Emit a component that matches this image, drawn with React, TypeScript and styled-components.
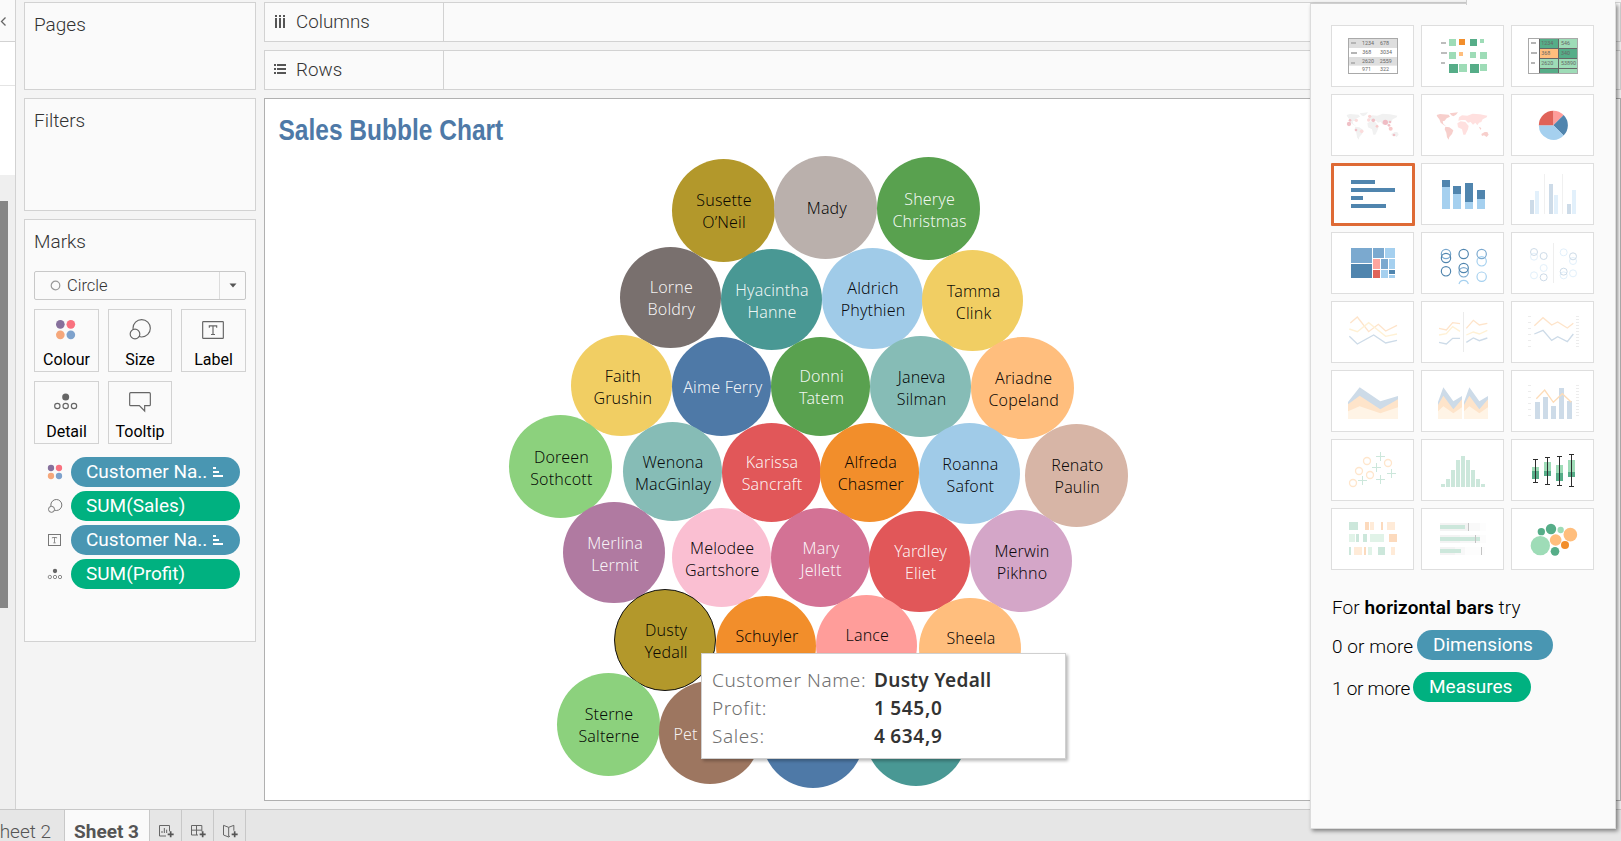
import React from "react";
import styled, { createGlobalStyle, css } from "styled-components";

const Global = createGlobalStyle`
  * { box-sizing: border-box; }
  body { margin: 0; background: #f4f4f4; font-family: Roboto, "Noto Sans", sans-serif; color: #333; }
  svg { display: block; }
`;

const Frame = styled.div`
  position: relative;
  display: flex;
  flex-direction: column;
  width: 1621px;
  height: 841px;
  overflow: hidden;
  background: #f4f4f4;
`;
const Workspace = styled.div`
  display: flex;
  height: 809px;
`;

/* data pane strip */
const DataStrip = styled.div`
  display: flex;
  flex-direction: column;
  width: 16px;
  height: 809px;
  border-right: 1px solid #d2d2d2;
  background: #fff;
`;
const StripHead = styled.div`
  height: 42px;
  padding-top: 16px;
  background: #fafafa;
  border-bottom: 1px solid #d2d2d2;
`;
const StripRow = styled.div`
  height: 44px;
  border-bottom: 1px solid #e4e4e4;
`;
const StripBody = styled.div`
  flex: 1;
  margin-top: 89px;
  padding-top: 26px;
  background: #efefef;
`;
const ScrollThumb = styled.div`
  width: 8px;
  height: 407px;
  background: #868686;
`;

/* shelves and cards */
const CardColumn = styled.div`
  display: flex;
  flex-direction: column;
  gap: 8px;
  width: 232px;
  margin: 2px 8px 0;
`;
const Card = styled.section<{ $h: number }>`
  height: ${(p) => p.$h}px;
  padding: 0 9px;
  border: 1px solid #d2d2d2;
  background: #fafafa;
`;
const CardTitle = styled.h2`
  margin: 0;
  padding-top: 8px;
  font-size: 19px;
  font-weight: 300;
  line-height: 28px;
`;
const Main = styled.div`
  display: flex;
  flex-direction: column;
  flex: 1;
  padding-top: 2px;
`;
const Shelf = styled.div`
  display: flex;
  height: 40px;
  margin-bottom: 8px;
  border: 1px solid #d2d2d2;
  background: #fafafa;
`;
const ShelfLabel = styled.div`
  display: flex;
  align-items: center;
  gap: 10px;
  width: 179px;
  padding-left: 9px;
  border-right: 1px solid #d2d2d2;
  font-size: 18.8px;
  font-weight: 300;
`;

const MarkSelect = styled.div`
  display: flex;
  width: 212px;
  height: 29px;
  margin: 15px 0 9px;
  border: 1px solid #c8c8c8;
  border-radius: 2px;
`;
const MarkSelectValue = styled.div`
  display: flex;
  align-items: center;
  gap: 6px;
  width: 185px;
  padding-left: 15px;
  border-right: 1px solid #dcdcdc;
  font-size: 16.5px;
  font-weight: 300;
`;
const SelectArrow = styled.div`
  flex: 1;
  display: flex;
  align-items: center;
  justify-content: center;
`;
const MarkGrid = styled.div`
  display: grid;
  grid-template-columns: 65px 64px 65px;
  gap: 9px;
`;
const MarkButton = styled.div`
  height: 63px;
  border: 1px solid #d2d2d2;
  text-align: center;
  color: #000;
  font-size: 16px;
  line-height: 20px;
`;
const PillRow = styled.div`
  display: flex;
  align-items: center;
  height: 30px;
  margin-bottom: 4px;
  padding-left: 13px;
  gap: 8px;
`;
const PillList = styled.div`
  margin-top: 13px;
`;
const Pill = styled.div<{ $tone: "blue" | "green"; $w: number }>`
  display: flex;
  align-items: center;
  width: ${(p) => p.$w}px;
  height: 30px;
  padding: 0 15px;
  border-radius: 15px;
  background: ${(p) => (p.$tone === "blue" ? "#4996b2" : "#00b180")};
  color: #fff;
  font-size: 19px;
  line-height: 30px;
  white-space: nowrap;
  svg { margin-left: 6px; }
`;

/* view */
const View = styled.div`
  position: relative;
  height: 703px;
  border: 1px solid #b0b0b0;
  background: #fff;
`;
const ViewTitle = styled.h1`
  width: max-content;
  margin: 0;
  padding: 13px 0 0 16px;
  color: #4e79a7;
  font: bold 29px/36px "Liberation Sans", sans-serif;
  transform: scaleX(0.845);
  transform-origin: 0 0;
`;
const Bubble = styled.div<{ $x: number; $y: number; $d: number; $fill: string; $light?: boolean; $selected?: boolean; $cut?: boolean }>`
  position: absolute;
  left: ${(p) => p.$x - 265 - p.$d / 2}px;
  top: ${(p) => p.$y - 99 - p.$d / 2}px;
  width: ${(p) => p.$d}px;
  height: ${(p) => p.$d}px;
  padding-top: 2px;
  display: flex;
  align-items: center;
  justify-content: ${(p) => (p.$cut ? "flex-start" : "center")};
  padding-left: ${(p) => (p.$cut ? 15 : 2)}px;
  border-radius: 50%;
  background: ${(p) => p.$fill};
  color: ${(p) => (p.$light ? "rgba(255,255,255,.92)" : "rgba(0,0,0,.95)")};
  font: 300 16px/22px "Noto Sans", sans-serif;
  letter-spacing: 0.15px;
  text-align: center;
  white-space: pre;
  ${(p) => p.$selected && css`border: 1px solid #111;`}
`;
const Tip = styled.div`
  position: absolute;
  left: 436px;
  top: 554px;
  width: 365px;
  height: 106px;
  padding: 12px 0 0 10px;
  display: grid;
  grid-template-columns: 162px 1fr;
  grid-auto-rows: 28px;
  border: 1px solid #d0d0d0;
  background: #fff;
  box-shadow: 2px 2px 3px rgba(0, 0, 0, 0.28);
  font: 19px/28px "Noto Sans", sans-serif;
  white-space: nowrap;
`;
const TipKey = styled.span`
  color: #707070;
  font-weight: 300;
  letter-spacing: 0.6px;
`;
const TipValue = styled.span<{ $num?: boolean }>`
  color: #333;
  font-weight: 600;
  letter-spacing: ${(p) => (p.$num ? 0.7 : 0.3)}px;
  word-spacing: ${(p) => (p.$num ? -1 : 0)}px;
`;

/* sheet tabs */
const TabBar = styled.div`
  display: flex;
  height: 32px;
  border-top: 1px solid #c8c8c8;
  background: #e6e6e6;
`;
const SheetTab = styled.div<{ $active?: boolean }>`
  display: flex;
  justify-content: flex-end;
  width: ${(p) => (p.$active ? 85 : 65)}px;
  padding-top: 13px;
  padding-right: ${(p) => (p.$active ? 10 : 13)}px;
  border-right: 1px solid #c8c8c8;
  background: ${(p) => (p.$active ? "#fafafa" : "#e6e6e6")};
  color: #555;
  font-size: 19px;
  font-weight: ${(p) => (p.$active ? 700 : 300)};
  line-height: 18px;
  white-space: nowrap;
`;
const NewTab = styled.div`
  width: 32px;
  border-right: 1px solid #c8c8c8;
`;

/* show me panel */
const ShowMe = styled.aside`
  position: absolute;
  left: 1310px;
  top: 3px;
  width: 306px;
  height: 826px;
  padding: 21px 0 0 20px;
  border: 1px solid #dcdcdc;
  border-top-color: #cfcfcf;
  background: #fafafa;
  box-shadow: 2px 2px 4px rgba(0, 0, 0, 0.45);
`;
const ShowMeTab = styled.div`
  position: absolute;
  left: 1466px;
  top: 0;
  width: 149px;
  height: 5px;
  border-left: 1px solid #cfcfcf;
  background: #fafafa;
`;
const ThumbGrid = styled.div`
  display: grid;
  grid-template-columns: repeat(3, 83px);
  grid-auto-rows: 62px;
  gap: 7px;
`;
const Thumb = styled.div<{ $on?: boolean }>`
  border: 1px solid #dedede;
  background: #fff;
  ${(p) => p.$on && css`
    width: 84px;
    height: 63px;
    border: 3px solid #de6a35;
    border-radius: 1px;
    svg { margin: -2px; }
  `}
`;
const Hint = styled.div`
  margin-top: 26px;
  padding-left: 1px;
  color: #000;
  font-size: 19px;
  font-weight: 300;
  line-height: 24px;
  letter-spacing: 0.1px;
  white-space: nowrap;
  b { font-weight: 600; }
`;
const HintRow = styled.div<{ $top: number }>`
  display: flex;
  align-items: center;
  margin-top: ${(p) => p.$top}px;
  color: #000;
  font-size: 19px;
  font-weight: 300;
  white-space: nowrap;
  ${Pill} { font-weight: 400; padding-left: 16px; }
`;
const HintCount = styled.span<{ $w: number; $tight?: boolean }>`
  width: ${(p) => p.$w}px;
  padding: 2px 0 0 1px;
  letter-spacing: ${(p) => (p.$tight ? -0.25 : 0.1)}px;
`;

type Box = [number, number, number, number, string];
const Rects = ({ of }: { of: Box[] }) => (
  <>
    {of.map(([x, y, w, h, fill], i) => (
      <rect key={i} x={x} y={y} width={w} height={h} fill={fill} />
    ))}
  </>
);
type Dot = [number, number, number, string];
const Dots = ({ of }: { of: Dot[] }) => (
  <>
    {of.map(([x, y, r, fill], i) => (
      <circle key={i} cx={x} cy={y} r={r} fill={fill} />
    ))}
  </>
);
const Rings = ({ of, r, sw = 3 }: { of: [number, number, string][]; r: number; sw?: number }) => (
  <>
    {of.map(([x, y, c], i) => (
      <circle key={i} cx={x} cy={y} r={r} fill="none" stroke={c} strokeWidth={sw} />
    ))}
  </>
);
const Line = ({ p, c, w = 4 }: { p: string; c: string; w?: number }) => (
  <polyline points={p} fill="none" stroke={c} strokeWidth={w} />
);
const Nums = ({ of }: { of: [number, number, string][] }) => (
  <g fontSize="16" fill="#666" fontFamily="Roboto, sans-serif">
    {of.map(([x, y, t], i) => (
      <text key={i} x={x} y={y}>{t}</text>
    ))}
  </g>
);

const DB = "#5085ae", LB = "#a5d0ef", MB = "#7ba9cf";
const FB = "#cddbe8", FL = "#e2f0fb", FO = "#fee4ca", FY = "#fff1d5";
const DG = "#56ad88", LG = "#9edcb7", FG = "#cce7db", PG = "#e1f3e8";
const OR = "#f28e2b", LO = "#ffbe7d", PO = "#ffebd8", PD = "#fcdabd";

const americas = "M140 345 L150 342 L176 344 L180 350 L170 355 L164 362 L158 364 L160 372 L168 378 L162 376 L152 368 L148 358 L142 350Z M179 340 L192 338 L204 337 L198 344 L190 349 L184 346Z M166 380 L178 382 L190 391 L186 402 L178 411 L176 419 L171 412 L169 398 L164 388Z";
const eurasia = "M205 362 L207 352 L216 346 L232 347 L248 341 L270 343 L292 347 L290 352 L278 358 L274 366 L267 368 L262 376 L256 368 L249 374 L242 366 L234 368 L226 360 L214 360Z M202 370 L212 364 L226 366 L236 378 L234 388 L226 404 L220 404 L216 388 L204 382Z";
const oceania = "M274 402 L284 396 L292 396 L296 404 L290 411 L282 406 L276 408Z M266 380 L274 384 L272 390Z";

const Ticks = ({ y }: { y: number }) => (
  <>
    {[0, 18, 36, 54, 72, 90].map((d) => (
      <rect key={d} x={684} y={y + d} width={9} height={2.5} fill="#e8e8e8" />
    ))}
    {[0, 9, 18, 27, 36, 45, 54, 63, 72, 81, 90].map((d) => (
      <rect key={d} x={828} y={y + d} width={9} height={2.5} fill="#e8e8e8" />
    ))}
  </>
);

const thumbs: { at: [number, number]; art: React.ReactNode; on?: boolean }[] = [
  { at: [93, 75], art: <>
    <rect x="145.5" y="115.5" width="147" height="105" fill="#fff" stroke="#a9a9a9" strokeWidth="3" />
    <Rects of={[[147, 117, 144, 27, "#dedede"], [147, 171, 144, 26, "#dedede"], [153, 126, 15, 6, "#b5b5b5"], [153, 156, 18, 6, "#b5b5b5"], [153, 186, 12, 6, "#b5b5b5"]]} />
    <Nums of={[[186, 136, "1234"], [240, 136, "678"], [187, 163, "368"], [240, 163, "3034"], [186, 190, "2620"], [239, 190, "2559"], [186, 214, "971"], [240, 214, "322"]]} /></> },
  { at: [363, 75], art: <Rects of={[[423, 126, 15, 6, "#bdbdbd"], [423, 156, 18, 6, "#bdbdbd"], [423, 186, 12, 6, "#bdbdbd"], [447, 117, 21, 21, LG], [477, 117, 18, 18, OR], [510, 117, 21, 21, DG], [540, 117, 12, 12, LG], [447, 156, 21, 21, LG], [477, 156, 12, 12, LO], [510, 156, 18, 18, LG], [540, 156, 21, 21, LG], [447, 192, 27, 27, DG], [477, 192, 24, 24, LG], [510, 192, 27, 27, DG], [540, 192, 21, 21, LG]]} /> },
  { at: [633, 75], art: <>
    <rect x="685.5" y="115.5" width="147" height="105" fill="#fff" stroke="#a9a9a9" strokeWidth="3" />
    <Rects of={[[693, 126, 15, 6, "#b5b5b5"], [693, 156, 18, 6, "#b5b5b5"], [693, 186, 12, 6, "#b5b5b5"], [717, 117, 114, 102, "#666"], [720, 117, 54, 27, DG], [777, 117, 54, 27, LG], [720, 147, 54, 27, LO], [777, 147, 54, 27, DG], [720, 177, 54, 27, LG], [777, 177, 54, 27, LG], [720, 207, 54, 12, DG], [777, 207, 54, 12, LG]]} />
    <Nums of={[[724, 135, "1234"], [783, 135, "546"], [724, 166, "368"], [783, 166, "340"], [724, 196, "2620"], [783, 196, "53890"]]} /></> },
  { at: [93, 282], art: <>
    <path d={americas + eurasia + oceania} fill="#f1f1f1" />
    <Dots of={[[147, 372, 6.5, "#f0c0c6"], [150, 361, 4, "#f0c0c6"], [169, 361, 5, "#fbdcdc"], [168, 390, 4, "#f0c0c6"], [185, 394, 5.5, "#fbdcdc"], [209, 349, 5, "#fad4d4"], [206, 360, 5, "#fbdcdc"], [220, 361, 5.5, "#f0c0c6"], [231, 379, 4, "#f8caca"], [256, 367, 8, "#f0bcc4"], [270, 366, 4, "#f0c0c6"], [267, 376, 4, "#f0c0c6"], [272, 386, 6, "#f8caca"], [282, 405, 4, "#f0c0c6"]]} /></> },
  { at: [363, 282], art: <g transform="translate(270 0)"><path d={americas + oceania} fill="#f7cfcc" /><path d={eurasia} fill="#ffe0df" /></g> },
  { at: [633, 282], art: <>
    <path d="M760 376 V332.5 A43.5 43.5 0 0 1 790.8 345.2Z" fill="#ff9d9a" />
    <path d="M760 376 L790.8 345.2 A43.5 43.5 0 0 1 790.8 406.8Z" fill={DB} />
    <path d="M760 376 L790.8 406.8 A43.5 43.5 0 0 1 716.5 376Z" fill={LB} />
    <path d="M760 376 H716.5 A43.5 43.5 0 0 1 760 332.5Z" fill="#e06359" /></> },
  { at: [93, 24], on: true, art: <Rects of={[[153, 75, 72, 12, DB], [153, 99, 132, 12, DB], [153, 123, 36, 12, DB], [153, 147, 105, 12, DB]]} /> },
  { at: [363, 24], art: <Rects of={[[426, 75, 24, 21, DB], [426, 96, 24, 66, LB], [459, 93, 24, 24, DB], [459, 117, 24, 45, LB], [495, 84, 24, 57, DB], [495, 141, 24, 21, LB], [531, 105, 24, 27, DB], [531, 132, 24, 30, LB]]} /> },
  { at: [633, 24], art: <Rects of={[[690, 135, 12, 42, FB], [705, 108, 12, 69, FL], [732, 57, 3, 120, "#f0f0f0"], [747, 87, 12, 90, FB], [762, 120, 12, 57, FL], [786, 57, 3, 120, "#f0f0f0"], [801, 147, 12, 30, FB], [816, 105, 12, 72, FL]]} /> },
  { at: [93, 231], art: <Rects of={[[153, 279, 63, 45, MB], [153, 327, 63, 42, DB], [219, 279, 33, 30, MB], [255, 279, 30, 30, LB], [219, 312, 21, 30, "#ffa59e"], [243, 312, 21, 30, MB], [267, 312, 18, 30, LB], [219, 345, 21, 24, "#e06359"], [243, 345, 21, 24, LB], [267, 345, 18, 12, DB], [267, 360, 18, 9, LB]]} /> },
  { at: [363, 231], art: <>
    <Rings r={14} sw={3.5} of={[[438, 297, MB], [438, 309, DB], [438, 349, DB], [491, 297, DB], [491, 352, MB], [491, 339, DB], [545, 319, LB], [545, 297, MB], [545, 365, LB]]} />
    <path d="M477 387 A14.5 14.5 0 0 1 505 387" fill="none" stroke={LB} strokeWidth="3.5" /></> },
  { at: [633, 231], art: <>
    <Rings r={10.5} of={[[702, 305, FL], [702, 291, FB], [731, 303, FB], [731, 339, FL], [702, 361, FL], [731, 367, FB], [791, 292, FL], [819, 318, FL], [819, 304, FB], [791, 361, FL], [791, 350, FB], [819, 355, FL]]} />
    <rect x="759" y="264" width="3" height="120" fill="#eee" /></> },
  { at: [93, 33], art: <><Line c={FO} p="151,99 172,81 206,125 235,103 257,123 291,106" /><Line c={FY} p="148,117 172,125 206,98 257,139 291,132" /><Line c={FB} p="148,139 172,162 221,135 257,159 291,151" /></> },
  { at: [363, 33], art: <>
    <Line c={FO} p="417,115 439,120 458,98 480,101" /><Line c={FY} p="417,135 439,131 458,110 480,124" /><Line c={FB} p="417,157 439,162 458,145 480,145" />
    <Line c={FO} p="499,115 520,91 538,105 562,100" /><Line c={FY} p="499,135 520,126 538,132 562,121" /><Line c={FB} p="499,157 520,144 538,152 562,144" />
    <rect x="489" y="66" width="3" height="120" fill="#ebebeb" /></> },
  { at: [633, 33], art: <><Ticks y={78} /><Line c={FO} p="703,107 729,83 755,105 773,96 802,114 820,100" /><Line c={FB} p="703,132 729,121 755,151 773,140 802,155 820,132" /></> },
  { at: [93, 240], art: <>
    <path d="M144 336 L179 292 L241 334 L294 318 V387 H144Z" fill={FB} /><path d="M144 343 L179 317 L241 358 L294 328 V387 H144Z" fill={FO} /><path d="M144 364 L179 349 L241 370 L294 352 V387 H144Z" fill="#fff4e6" /></> },
  { at: [363, 240], art: <>{[0, 78].map((dx) => (
    <g key={dx} transform={`translate(${dx} 0)`}>
      <path d="M414 336 L430 292 L460 334 L486 318 V387 H414Z" fill={FB} /><path d="M414 345 L430 317 L460 358 L486 328 V387 H414Z" fill={FO} /><path d="M414 364 L430 349 L460 370 L486 352 V387 H414Z" fill="#fff4e6" />
    </g>))}</> },
  { at: [633, 240], art: <><Ticks y={285} />
    <Rects of={[[705, 336, 15, 51, FB], [729, 321, 15, 66, FB], [753, 348, 15, 39, FB], [777, 294, 15, 93, FB], [801, 333, 15, 54, FB]]} />
    <Line c="#fddcb8" p="709,326 734,300 760,337 787,311 814,337" /></> },
  { at: [93, 27], art: <>
    <Rings r={10.5} sw={4} of={[[201, 93, "#ffe6cc"], [264, 99, "#ffe6cc"], [177, 123, "#ffe6cc"], [210, 135, "#ffe6cc"], [159, 159, "#ffe6cc"]]} />
    {[[241.5, 79.5], [229.5, 112.5], [274.5, 130.5], [187.5, 151.5], [241.5, 148.5]].map(([x, y]) => (
      <path key={x + y} d={`M${x - 13.5} ${y} h27 M${x} ${y - 13.5} v27`} stroke={FG} strokeWidth="3" />))}</> },
  { at: [363, 27], art: <Rects of={[[423, 162, 12, 9, FG], [438, 147, 12, 24, FG], [453, 120, 12, 51, FG], [468, 90, 12, 81, FG], [483, 78, 12, 93, FG], [498, 90, 12, 81, FG], [513, 120, 12, 51, FG], [528, 147, 12, 24, FG], [543, 162, 12, 9, FG]]} /> },
  { at: [633, 27], art: <>
    <Rects of={[[696, 111, 21, 12, LG], [696, 123, 21, 24, DG], [732, 96, 21, 27, LG], [732, 123, 21, 15, DG], [768, 105, 21, 24, LG], [768, 129, 21, 24, DG], [804, 90, 21, 36, LG], [804, 126, 21, 15, DG]]} />
    {[[706.5, 88.5, 157.5], [742.5, 82.5, 163.5], [778.5, 79.5, 166.5], [814.5, 73.5, 169.5]].map(([x, a, b]) => (
      <path key={x} d={`M${x - 7.5} ${a} h15 M${x} ${a} V${b} M${x - 7.5} ${b} h15`} stroke="#2d2d2d" strokeWidth="3" fill="none" />))}</> },
  { at: [93, 234], art: <Rects of={[[147, 276, 27, 24, FG], [195, 276, 12, 24, PD], [210, 276, 12, 24, PO], [243, 276, 6, 24, PD], [261, 276, 24, 24, PO], [147, 312, 18, 24, PG], [168, 312, 9, 24, FG], [189, 312, 12, 24, FG], [210, 312, 42, 24, PG], [267, 312, 24, 24, PD], [147, 351, 6, 24, FG], [162, 351, 24, 24, PO], [192, 351, 6, 24, PD], [204, 351, 12, 24, PG], [234, 351, 21, 24, FG], [273, 351, 12, 24, PO]]} /> },
  { at: [363, 234], art: <Rects of={[[420, 279, 87, 24, "#f3f3f3"], [507, 279, 33, 24, "#f9f9f9"], [540, 279, 18, 24, "#fdfdfd"], [420, 315, 60, 24, "#f3f3f3"], [480, 315, 60, 24, "#f7f7f7"], [540, 315, 18, 24, "#fcfcfc"], [420, 351, 45, 24, "#f3f3f3"], [465, 351, 30, 24, "#f8f8f8"], [495, 351, 60, 24, "#fdfdfd"], [420, 285, 75, 12, FG], [420, 321, 120, 12, FG], [420, 357, 63, 12, FG], [504, 279, 3, 24, "#c4c4c4"], [525, 315, 3, 24, "#c4c4c4"], [543, 351, 3, 24, "#c4c4c4"]]} /> },
  { at: [633, 234], art: <Dots of={[[721, 347, 29, LG], [724, 305, 11, DG], [753, 297, 15.5, DG], [782, 300, 9.5, LG], [811, 314, 20.5, LO], [767, 330, 17.5, LO], [795, 345, 12, OR], [765, 364, 13, DG]]} /> },
];

const ColourArt = ({ x, y, dx, r }: { x: number; y: number; dx: number; r: number }) => (
  <Dots of={[[x, y, r, "#86709c"], [x + dx, y, r, "#f9717f"], [x, y + dx, r, "#f5a77b"], [x + dx, y + dx, r, "#7ea2cc"]]} />
);

const markButtons = [
  { label: "Colour", vb: "105 300 189 120", art: <ColourArt x={181} y={343} dx={31.5} r={13} /> },
  { label: "Size", vb: "327 300 186 120", art: <><circle cx="425" cy="355" r="26" fill="none" stroke="#666" strokeWidth="3.5" /><circle cx="405" cy="372" r="14.5" fill="#fafafa" stroke="#666" strokeWidth="3.5" /></> },
  { label: "Label", vb: "546 300 189 120", art: <><rect x="608" y="335" width="62" height="50" rx="2" fill="none" stroke="#666" strokeWidth="3.5" /><path d="M628 353 V347.5 H650 V353 M639 347 V373 M633 373.5 H645" fill="none" stroke="#666" strokeWidth="3.5" /></> },
  { label: "Detail", vb: "105 516 189 120", art: <><circle cx="197" cy="561" r="10.5" fill="#666" /><Rings r={8} sw={3.5} of={[[172, 588, "#666"], [197, 588, "#666"], [222, 588, "#666"]]} /></> },
  { label: "Tooltip", vb: "327 516 186 120", art: <path d="M392 548 H448 Q451 548 451 551 V584 Q451 587 448 587 H434 V603 L418 587 H392 Q389 587 389 584 V551 Q389 548 392 548Z" fill="none" stroke="#666" strokeWidth="3.5" /> },
];

const SortIcon = () => (
  <svg width="11" height="11" viewBox="0 0 11 11"><path d="M0 1h3M0 5h6M0 9h10" stroke="#fff" strokeWidth="2" /></svg>
);

const pills: { text: string; tone: "blue" | "green"; vb: string; art: React.ReactNode; sort?: boolean }[] = [
  { text: "Customer Na..", tone: "blue", sort: true, vb: "141 72 48 48", art: <ColourArt x={153} y={84} dx={24} r={9.5} /> },
  { text: "SUM(Sales)", tone: "green", vb: "141 174 48 48", art: <><circle cx="169" cy="195" r="16.5" fill="none" stroke="#777" strokeWidth="3" /><circle cx="154.5" cy="208" r="9" fill="#fafafa" stroke="#777" strokeWidth="3" /></> },
  { text: "Customer Na..", tone: "blue", sort: true, vb: "141 276 48 48", art: <><rect x="145.5" y="283.5" width="36" height="33" fill="none" stroke="#777" strokeWidth="3" /><path d="M157 295 V292.5 H170 V295 M163.5 292 V308 M160 308.5 H167" fill="none" stroke="#777" strokeWidth="2.5" /></> },
  { text: "SUM(Profit)", tone: "green", vb: "141 378 48 48", art: <><circle cx="165" cy="393" r="6.5" fill="#666" /><Rings r={5} sw={2.5} of={[[149.5, 411, "#777"], [165, 411, "#777"], [180, 411, "#777"]]} /></> },
];

type Mode = "dark" | "light" | "selected" | "cut";
const bubbles: [number, number, number, string, string, Mode?][] = [
  [723, 210.2, 103, "#b3982b", "Susette\nO’Neil"],
  [825.9, 207.3, 103, "#bab0ac", "Mady"],
  [928.6, 208.7, 103, "#59a14f", "Sherye\nChristmas", "light"],
  [670.4, 297, 101, "#79706e", "Lorne\nBoldry", "light"],
  [771, 299.5, 101, "#499894", "Hyacintha\nHanne", "light"],
  [872, 298, 101, "#a0cbe8", "Aldrich\nPhythien"],
  [972.7, 300.5, 101, "#f1ce63", "Tamma\nClink"],
  [621.8, 385.5, 101, "#f1ce63", "Faith\nGrushin"],
  [721.8, 386.3, 99, "#4e79a7", "Aime Ferry", "light"],
  [820.6, 386.3, 99, "#59a14f", "Donni\nTatem", "light"],
  [920.6, 386.5, 100.5, "#86bcb6", "Janeva\nSilman"],
  [1022.7, 388.2, 102.5, "#ffbe7d", "Ariadne\nCopeland"],
  [560.4, 466.5, 103, "#8cd17d", "Doreen\nSothcott"],
  [672, 471.7, 99, "#86bcb6", "Wenona\nMacGinlay"],
  [771, 472, 99, "#e15759", "Karissa\nSancraft", "light"],
  [869.8, 472, 99, "#f28e2b", "Alfreda\nChasmer"],
  [969.4, 473.5, 101, "#a0cbe8", "Roanna\nSafont"],
  [1076.3, 475, 103, "#d7b5a6", "Renato\nPaulin"],
  [614.1, 552.8, 101.3, "#b07aa1", "Merlina\nLermit", "light"],
  [721.2, 557.5, 99, "#fabfd2", "Melodee\nGartshore"],
  [820, 557.5, 99, "#d37295", "Mary\nJellett", "light"],
  [919.6, 561.3, 101, "#e15759", "Yardley\nEliet", "light"],
  [1021, 560.8, 102, "#d4a6c8", "Merwin\nPikhno"],
  [665.1, 639.9, 102, "#b3982b", "Dusty\nYedall", "selected"],
  [765.9, 646, 100, "#f28e2b", "Schuyler\n "],
  [866.3, 645.4, 101, "#ff9d9a", "Lance\n "],
  [970, 648.4, 101.6, "#ffbe7d", "Sheela\n "],
  [608, 724.2, 103, "#8cd17d", "Sterne\nSalterne"],
  [709.8, 732.5, 102.5, "#9d7660", "Pet", "cut"],
  [812.7, 737, 102, "#4e79a7", ""],
  [915.5, 734.7, 102, "#499894", ""],
];

const PlusMark = ({ x }: { x: number }) => (
  <path d={`M${x - 8} 163 H${x + 10} M${x + 1} 154 V172`} stroke="#555" strokeWidth="5" />
);

export default function App() {
  return (
    <Frame>
      <Global />
      <Workspace>
        <DataStrip>
          <StripHead>
            <svg width="8" height="12" viewBox="0 0 8 12"><path d="M5.5 1.5 L1.5 5.5 L5.5 9.5" fill="none" stroke="#666" strokeWidth="1.3" /></svg>
          </StripHead>
          <StripRow />
          <StripBody><ScrollThumb /></StripBody>
        </DataStrip>
        <CardColumn>
          <Card $h={88}><CardTitle>Pages</CardTitle></Card>
          <Card $h={113}><CardTitle>Filters</CardTitle></Card>
          <Card $h={423}>
            <CardTitle>Marks</CardTitle>
            <MarkSelect>
              <MarkSelectValue>
                <svg width="11" height="11" viewBox="0 0 11 11"><circle cx="5.5" cy="5.5" r="4.3" fill="none" stroke="#999" strokeWidth="1.2" /></svg>
                Circle
              </MarkSelectValue>
              <SelectArrow><svg width="8" height="5" viewBox="0 0 8 5"><path d="M0.5 0.5h7L4 4.5z" fill="#555" /></svg></SelectArrow>
            </MarkSelect>
            <MarkGrid>
              {markButtons.map((b) => (
                <MarkButton key={b.label}>
                  <svg width={b.vb.includes(" 186 ") ? 62 : 63} height="40" viewBox={b.vb}>{b.art}</svg>
                  {b.label}
                </MarkButton>
              ))}
            </MarkGrid>
            <PillList>
              {pills.map((p, i) => (
                <PillRow key={i}>
                  <svg width="16" height="16" viewBox={p.vb}>{p.art}</svg>
                  <Pill $tone={p.tone} $w={169}>{p.text}{p.sort && <SortIcon />}</Pill>
                </PillRow>
              ))}
            </PillList>
          </Card>
        </CardColumn>
        <Main>
          <Shelf>
            <ShelfLabel>
              <svg width="12" height="14" viewBox="0 0 12 14"><path d="M2 0v2M6 0v2M10 0v2M2 3v10M6 3v10M10 3v10" stroke="#555" strokeWidth="2" /></svg>
              Columns
            </ShelfLabel>
          </Shelf>
          <Shelf>
            <ShelfLabel>
              <svg width="12" height="14" viewBox="0 0 12 14"><path d="M0 2h2M3 2h9M0 6h2M3 6h9M0 10h2M3 10h9" stroke="#555" strokeWidth="2" /></svg>
              Rows
            </ShelfLabel>
          </Shelf>
          <View>
            <ViewTitle>Sales Bubble Chart</ViewTitle>
            {bubbles.map(([x, y, d, fill, name, mode], i) => (
              <Bubble key={i} $x={x} $y={y} $d={d} $fill={fill} $light={mode === "light" || mode === "cut"} $selected={mode === "selected"} $cut={mode === "cut"}>{name}</Bubble>
            ))}
            <Tip>
              <TipKey>Customer Name:</TipKey><TipValue>Dusty Yedall</TipValue>
              <TipKey>Profit:</TipKey><TipValue $num>1 545,0</TipValue>
              <TipKey>Sales:</TipKey><TipValue $num>4 634,9</TipValue>
            </Tip>
          </View>
        </Main>
      </Workspace>
      <TabBar>
        <SheetTab>heet 2</SheetTab>
        <SheetTab $active>Sheet 3</SheetTab>
        <NewTab>
          <svg width="31" height="31" viewBox="450 90 93 93"><path d="M498 168 H478.5 V136.5 H508.5 V154 M486 159 V153 M493 159 V144 M500 159 V149" fill="none" stroke="#666" strokeWidth="3" /><PlusMark x={511} /></svg>
        </NewTab>
        <NewTab>
          <svg width="31" height="31" viewBox="546 90 93 93"><path d="M594 165 H574.5 V136.5 H605.5 V154 M574 150.5 H605 M589.5 136 V165" fill="none" stroke="#666" strokeWidth="3" /><PlusMark x={607} /></svg>
        </NewTab>
        <NewTab>
          <svg width="31" height="31" viewBox="642 90 93 93"><path d="M701.5 152 V136 L686 142 L670.5 136 V165 L686 171 L690 168 M686 142 V170" fill="none" stroke="#666" strokeWidth="3" /><PlusMark x={703} /></svg>
        </NewTab>
      </TabBar>
      <ShowMe>
        <ThumbGrid>
          {thumbs.map((t, i) => (
            <Thumb key={i} $on={t.on}>
              <svg width="81" height="60" viewBox={`${t.at[0] + 3} ${t.at[1] + 3} 243 180`}>{t.art}</svg>
            </Thumb>
          ))}
        </ThumbGrid>
        <Hint>For <b>horizontal bars</b> try</Hint>
        <HintRow $top={10}><HintCount $w={86}>0 or more</HintCount><Pill $tone="blue" $w={136}>Dimensions</Pill></HintRow>
        <HintRow $top={12}><HintCount $w={82} $tight>1 or more</HintCount><Pill $tone="green" $w={118}>Measures</Pill></HintRow>
      </ShowMe>
      <ShowMeTab />
    </Frame>
  );
}
